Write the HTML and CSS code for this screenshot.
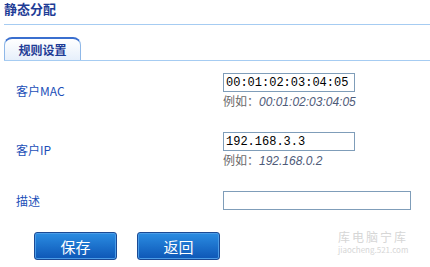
FILE: index.html
```html
<!DOCTYPE html>
<html lang="zh-CN">
<head>
    <meta charset="UTF-8">
    <title>静态分配</title>
    <link rel="stylesheet" href="styles.css">
</head>
<body>
    <div class="page">
        <h2 class="title">静态分配</h2>
        <div class="tabs">
            <div class="tab">规则设置</div>
        </div>
        <div class="form">
            <div class="row row-hint">
                <label class="label">客户MAC</label>
                <div class="field">
                    <input class="input" type="text" value="00:01:02:03:04:05">
                    <div class="hint">例如：<em>00:01:02:03:04:05</em></div>
                </div>
            </div>
            <div class="row row-hint">
                <label class="label">客户IP</label>
                <div class="field">
                    <input class="input" type="text" value="192.168.3.3">
                    <div class="hint">例如：<em>192.168.0.2</em></div>
                </div>
            </div>
            <div class="row">
                <label class="label">描述</label>
                <div class="field">
                    <input class="input input-wide" type="text" value="">
                </div>
            </div>
            <div class="buttons">
                <button class="btn">保存</button>
                <button class="btn">返回</button>
            </div>
        </div>
        <div class="watermark">
            <div>库电脑宁库</div>
            <div class="wm-small">jiaocheng.521.com</div>
        </div>
    </div>
</body>
</html>
```

FILE: styles.css
```css
body {
    margin: 0;
    background: #ffffff;
    font-family: "Noto Sans CJK SC", "Liberation Sans", sans-serif;
    font-size: 12px;
}
.page {
    position: relative;
    width: 430px;
    height: 267px;
    padding-left: 4px;
    box-sizing: border-box;
    overflow: hidden;
}
.title {
    margin: 0;
    height: 24px;
    font-size: 13px;
    font-weight: bold;
    line-height: 17px;
    color: #1e3c96;
    border-bottom: 1px solid #a6ccf2;
}
.tabs {
    margin-top: 10px;
    height: 25px;
    border-bottom: 1px solid #a6ccf2;
    display: flex;
    align-items: flex-end;
}
.tab {
    width: 77px;
    height: 23px;
    box-sizing: border-box;
    border: 1px solid #8fb8e8;
    border-top: 2px solid #3a6fcf;
    border-bottom: none;
    border-radius: 8px 8px 0 0;
    background: linear-gradient(to bottom, #ffffff, #e6effb);
    text-align: center;
    font-weight: bold;
    font-size: 12px;
    line-height: 21px;
    color: #1e3c96;
}
.form {
    padding: 12px 0 0 12px;
}
.row {
    display: flex;
    align-items: center;
}
.row-hint {
    margin-bottom: 24px;
}
.label {
    width: 207px;
    color: #1c50b8;
    font-size: 12px;
}
.input {
    display: block;
    width: 132px;
    height: 19px;
    box-sizing: border-box;
    border: 1px solid #7f9db9;
    padding: 0 2px;
    font-family: "Liberation Mono", monospace;
    font-size: 12px;
    color: #000000;
    outline: none;
}
.input-wide {
    width: 188px;
}
.hint {
    height: 15px;
    line-height: 15px;
    margin-top: 1px;
    color: #6a6a6a;
    font-size: 12px;
}
.hint em {
    font-family: "Liberation Sans", sans-serif;
    color: #4e5a78;
}
.buttons {
    display: flex;
    gap: 20px;
    margin-top: 22px;
    padding-left: 18px;
}
.btn {
    width: 83px;
    height: 28px;
    border: 1px solid #1b4a94;
    border-radius: 3px;
    background: linear-gradient(to bottom, #2b8de2, #0d56b6);
    box-shadow: inset 0 0 0 1px #4b9ce6;
    color: #ffffff;
    font-family: "Noto Sans CJK SC", sans-serif;
    font-size: 15px;
    cursor: pointer;
}
.watermark {
    position: absolute;
    left: 338px;
    top: 230px;
    color: #d6d6d6;
    font-size: 12px;
    line-height: 14px;
    letter-spacing: 2px;
}
.wm-small {
    font-size: 8px;
    line-height: 12px;
    letter-spacing: 0;
}
```
